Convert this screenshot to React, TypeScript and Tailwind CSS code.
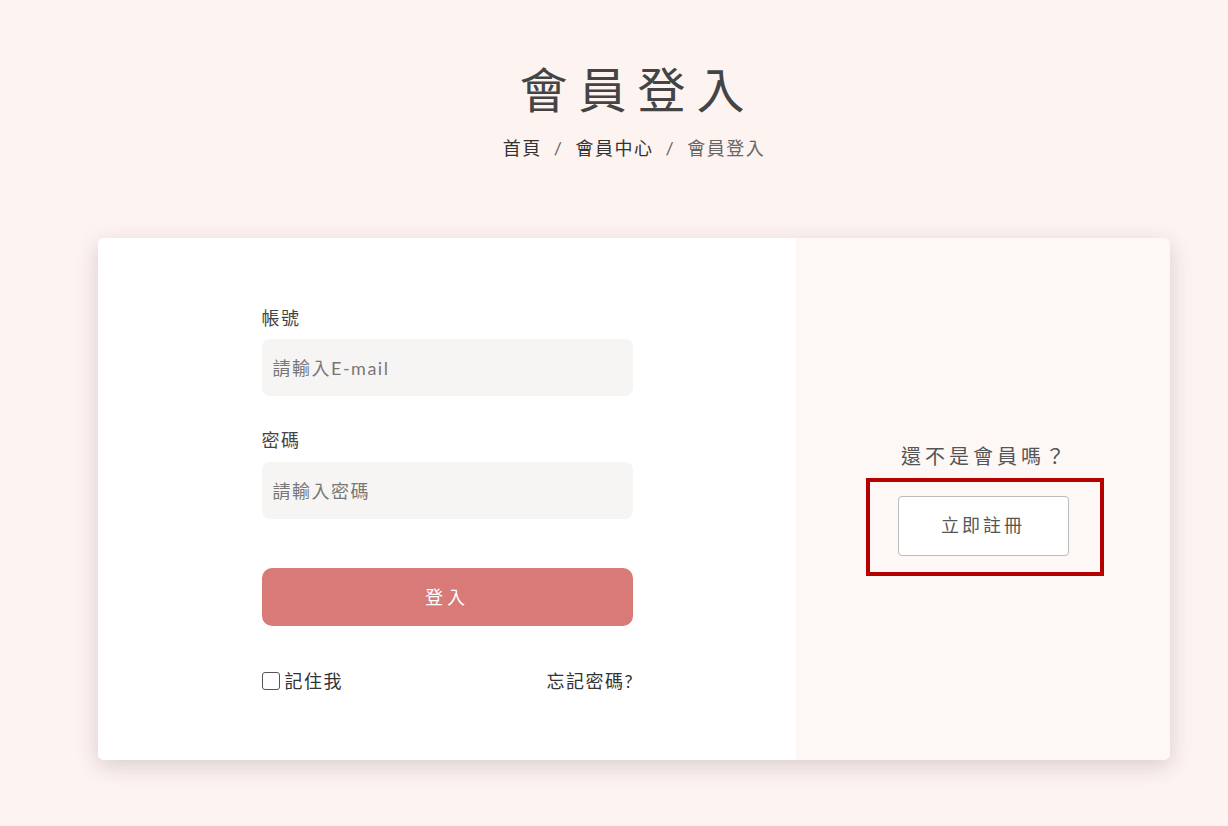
import React from "react";

export default function App() {
  const font = { fontFamily: '"Lato", "Noto Sans CJK TC", sans-serif' };
  return (
    <div className="min-h-[826px] w-full bg-[#fdf3f1] text-[#444]" style={font}>
      <div className="ml-[98px] w-[1072px] pt-[60px] pb-[66px]">
        <div className="flex flex-col items-center">
          <h1 className="text-[48px] leading-[60px] font-normal tracking-[11px] mr-[-7px] text-[#444]">會員登入</h1>
          <nav className="mt-[14px] flex items-center text-[18px] leading-[28px] tracking-[1.5px]">
            <span className="text-[#333]">首頁</span>
            <span className="mx-[12px] text-[#666]">/</span>
            <span className="text-[#333]">會員中心</span>
            <span className="mx-[12px] text-[#666]">/</span>
            <span className="text-[#666]">會員登入</span>
          </nav>
        </div>

        <div className="mt-[76px] flex rounded-[6px] bg-white shadow-[0_6px_22px_rgba(60,40,40,0.18)] overflow-hidden">
          <div className="w-[698px] bg-white flex justify-center pt-[67px] pb-[66px]">
            <div className="w-[371px] flex flex-col">
              <label className="text-[18px] leading-[26px] tracking-[1.5px] text-[#444]">帳號</label>
              <input
                className="mt-[8px] h-[57px] w-full rounded-[8px] bg-[#f7f5f4] px-[11px] text-[18px] tracking-[1.5px] text-[#444] placeholder:text-[#777] outline-none"
                placeholder="請輸入E-mail"
                style={font}
              />
              <label className="mt-[31px] text-[18px] leading-[26px] tracking-[1.5px] text-[#444]">密碼</label>
              <input
                type="password"
                className="mt-[9px] h-[57px] w-full rounded-[8px] bg-[#f7f5f4] px-[11px] text-[18px] tracking-[1.5px] text-[#444] placeholder:text-[#777] outline-none"
                placeholder="請輸入密碼"
                style={font}
              />
              <button
                className="mt-[49px] h-[58px] w-full rounded-[10px] bg-[#d77a78] text-[18px] text-white tracking-[4px]"
                style={font}
              >
                登入
              </button>
              <div className="mt-[42px] flex items-center justify-between text-[18px] leading-[26px] tracking-[1.5px] text-[#333]">
                <label className="flex items-center">
                  <span className="inline-block w-[18px] h-[18px] border border-[#555] rounded-[3px] bg-white mr-[5px]" />
                  記住我
                </label>
                <span className="mr-[-1.5px]">忘記密碼?</span>
              </div>
            </div>
          </div>
          <div className="flex-1 bg-[#fdf7f5] flex flex-col items-center justify-center">
            <p className="text-[20px] leading-[26px] tracking-[4px] mr-[-4px] text-[#555]">還不是會員嗎？</p>
            <div className="relative mt-[27px]">
              <button
                className="h-[60px] w-[171px] rounded-[4px] border border-[#bbb] bg-white text-[18px] tracking-[3px] text-[#555]"
                style={font}
              >
                立即註冊
              </button>
              <div className="pointer-events-none absolute top-[-18px] left-[-32px] right-[-35px] bottom-[-20px] border-4 border-[#b50000]" />
            </div>
          </div>
        </div>
      </div>
    </div>
  );
}
